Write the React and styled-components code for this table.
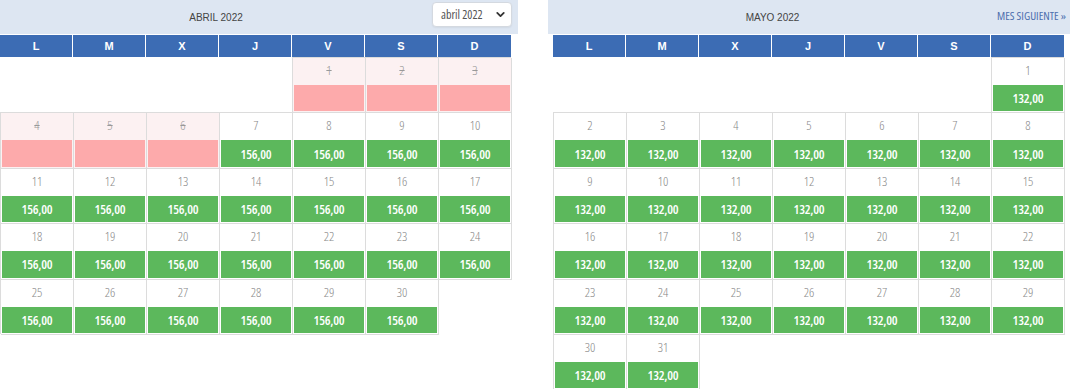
import React from 'react'
import styled, { createGlobalStyle } from 'styled-components'
import { ChevronDown } from 'lucide-react'

const GlobalStyle = createGlobalStyle`
    html, body {
        margin: 0;
        padding: 0;
        background: #fff;
        overflow: hidden;
    }
    body {
        font-family: "Liberation Sans", Arial, sans-serif;
    }
`

// condensed face through the width axis
const CONDENSED = `"Open Sans", sans-serif`

const weekdays = ['L', 'M', 'X', 'J', 'V', 'S', 'D']

// offset = column of day 1 (1 = lunes)
const months = [
    { title: 'ABRIL 2022', days: 30, offset: 5, price: '156,00', pastUntil: 6 },
    { title: 'MAYO 2022', days: 31, offset: 7, price: '132,00', pastUntil: 0 },
]

const Month = ({ month, right }) => {
    const days = Array.from({ length: month.days }, (_, i) => i + 1)
    return (
        <Panel right={right}>
            <Header right={right}>
                <Title>{month.title}</Title>
                {right ? (
                    <NextLink href="#">MES SIGUIENTE »</NextLink>
                ) : (
                    <SelectBox>
                        <span>abril 2022</span>
                        <ChevronDown size={13} strokeWidth={3.4} />
                    </SelectBox>
                )}
            </Header>
            <Table right={right}>
                <WeekRow>
                    {weekdays.map(d => <DayName key={d}>{d}</DayName>)}
                </WeekRow>
                <DaysGrid>
                    {days.map(day => {
                        const past = day <= month.pastUntil
                        return (
                            <DayCell key={day} past={past} start={day === 1 ? month.offset : undefined}>
                                <DayNumber past={past}>{day}</DayNumber>
                                <PriceBox past={past}>{past ? '' : month.price}</PriceBox>
                            </DayCell>
                        )
                    })}
                </DaysGrid>
            </Table>
        </Panel>
    )
}

export default function App() {
    return (
        <>
            <GlobalStyle />
            <Page>
                <Month month={months[0]} />
                <Month month={months[1]} right />
            </Page>
        </>
    )
}

const Page = styled.div`
    display: flex;
    gap: 30px;
    width: 1070px;
`
const Panel = styled.div`
    width: ${p => (p.right ? '522px' : '518px')};
    flex-shrink: 0;
`
const Header = styled.div`
    height: 34px;
    background: #dde6f2;
    display: flex;
    align-items: center;
    padding: 0 ${p => (p.right ? '4px' : '6px')} 0 0;
    box-sizing: border-box;
    margin-bottom: 1px;
`
const Title = styled.div`
    flex: 1;
    text-align: center;
    font-size: 10px;
    color: #444;
    padding-top: 1px;
`
const SelectBox = styled.div`
    width: 80px;
    height: 25px;
    margin-top: -6px;
    box-sizing: border-box;
    background: #fff;
    border: 1px solid #d4d9e0;
    border-radius: 4px;
    box-shadow: 0 1px 2px rgba(0, 0, 0, 0.06);
    display: flex;
    align-items: center;
    justify-content: space-between;
    padding: 0 4px 0 8px;
    font-family: ${CONDENSED};
    font-stretch: 75%;
    font-size: 12px;
    color: #555;
    white-space: nowrap;
    svg {
        color: #333;
    }
`
const NextLink = styled.a`
    font-family: ${CONDENSED};
    font-stretch: 75%;
    font-size: 11.5px;
    color: #4d6fae;
    text-decoration: none;
    margin-top: -3px;
`
const Table = styled.div`
    width: 512px;
    margin-left: ${p => (p.right ? '5px' : '0')};
`
const WeekRow = styled.div`
    display: grid;
    grid-template-columns: repeat(7, 73px);
    height: 22px;
`
const DayName = styled.div`
    background: #3c6cb4;
    margin-right: 1px;
    color: #fff;
    font-weight: bold;
    font-size: 11px;
    display: flex;
    align-items: center;
    justify-content: center;
    &:last-child {
        margin-right: 0;
    }
`
const DaysGrid = styled.div`
    display: grid;
    grid-template-columns: repeat(7, 73px);
    grid-auto-rows: 55.4px;
`
const DayCell = styled.div`
    grid-column-start: ${p => p.start || 'auto'};
    box-sizing: border-box;
    padding: 1px 1px 1px 2px;
    display: flex;
    flex-direction: column;
    background: ${p => (p.past ? '#fcf1f2' : '#fff')};
    box-shadow: inset 1px 1px 0 #dcdcdc, 1px 1px 0 #dcdcdc;
`
const DayNumber = styled.div`
    height: 27px;
    line-height: 24px;
    text-align: center;
    font-family: ${CONDENSED};
    font-stretch: 75%;
    font-weight: 300;
    font-size: 13px;
    color: ${p => (p.past ? '#999' : '#888')};
    text-decoration: ${p => (p.past ? 'line-through' : 'none')};
`
const PriceBox = styled.div`
    flex: 1;
    background: ${p => (p.past ? '#fdaaab' : '#5cb85c')};
    color: #fff;
    font-family: ${CONDENSED};
    font-stretch: 75%;
    font-weight: 600;
    font-size: 13px;
    letter-spacing: -0.2px;
    display: flex;
    align-items: center;
    justify-content: center;
`
